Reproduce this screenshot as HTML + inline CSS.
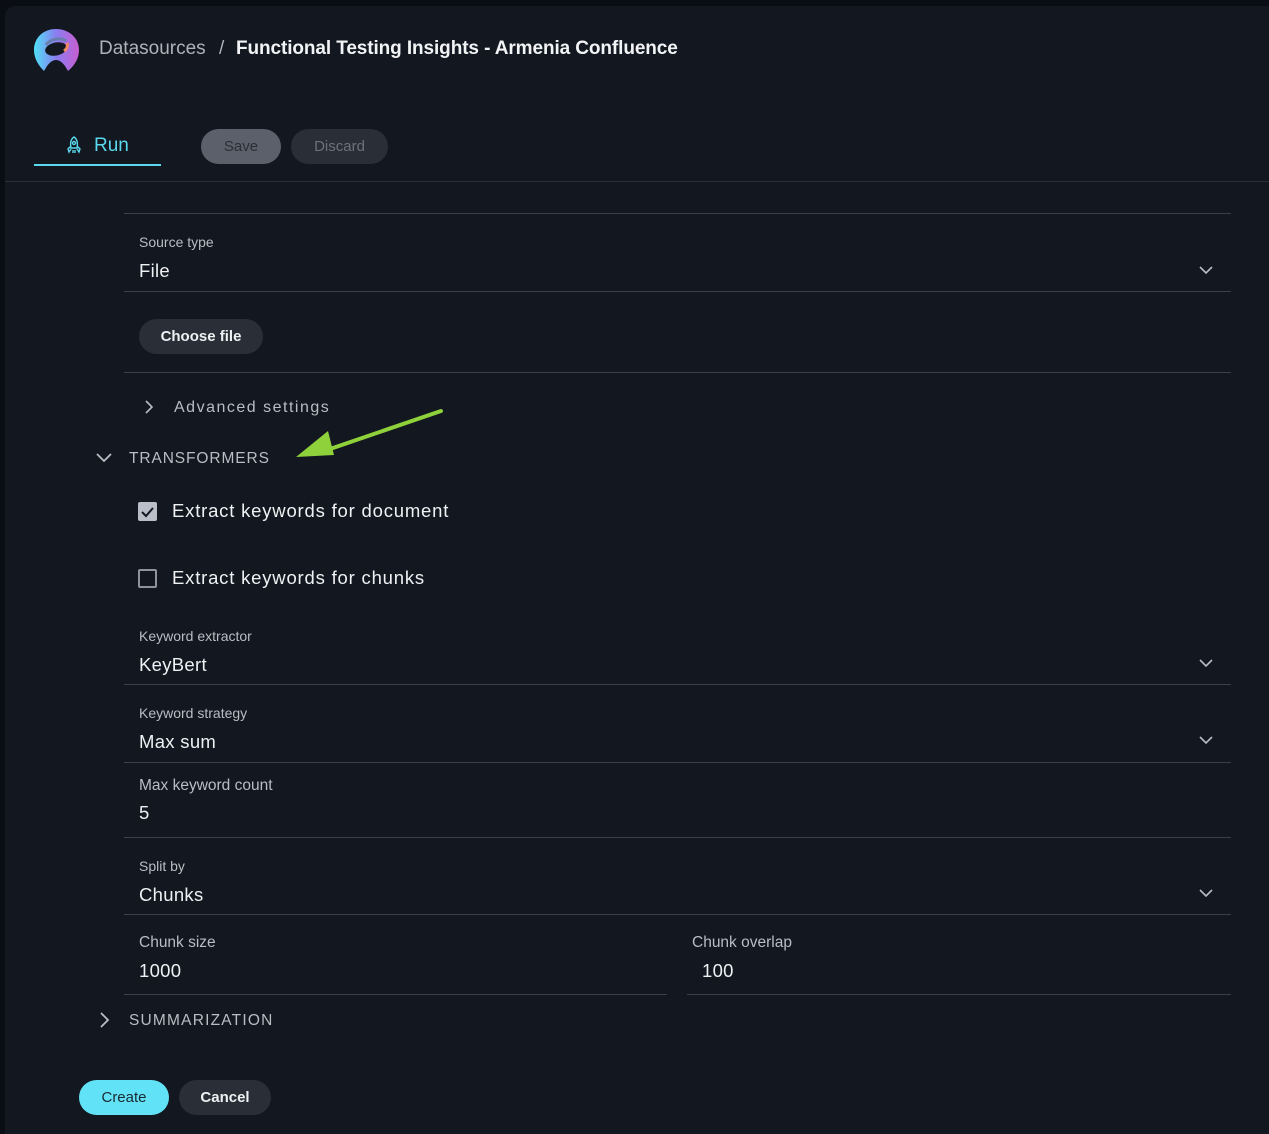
<!DOCTYPE html>
<html><head><meta charset="utf-8"><style>
*{margin:0;padding:0;box-sizing:border-box}
body{width:1269px;height:1134px;background:#0a0d13;font-family:"Liberation Sans",sans-serif;position:relative;overflow:hidden;color:#eceef0}
.panel{position:absolute;left:5px;top:6px;width:1264px;height:1128px;background:#121720;border-radius:10px 0 0 0}
.a{position:absolute;white-space:nowrap}
.line{position:absolute;height:1px;background:#3b404a}
.lbl{font-size:14px;color:#b9bdc4}
.val{font-size:18.5px;color:#eef0f2;letter-spacing:0.3px}
.chev{position:absolute;width:18px;height:18px}
.btn{position:absolute;border-radius:18px;text-align:center;font-size:15px}
.cb{position:absolute;width:19px;height:19px;border:2px solid #8e949c;border-radius:2px}
</style></head><body>
<div class="panel"></div>
<svg class="a" style="left:33px;top:28px" width="47" height="45" viewBox="0 0 47 45">
<defs><linearGradient id="g" x1="0" x2="1" y1="0" y2="0"><stop offset="0" stop-color="#4fe0f6"/><stop offset="0.5" stop-color="#8b7cf0"/><stop offset="1" stop-color="#c85ed0"/></linearGradient></defs>
<path d="M23 1C10 1 1 10 1 22c0 9 5 16 10 21l3-5c3-4 6-6 9-6s6 2 9 6l3 5c6-5 11-12 11-21C46 10 36 1 23 1z" fill="url(#g)"/>
<ellipse cx="23" cy="21" rx="11" ry="6.5" fill="#121720" transform="rotate(-12 23 21)"/>
<path d="M13 17c4-6 14-8 20-4" stroke="#6a7fb0" stroke-width="3" fill="none"/>
<path d="M31 23c3-2 4-5 3-8" stroke="#f08a60" stroke-width="3" fill="none"/>
</svg>
<div class="a" style="left:99px;top:38px;font-size:19px;color:#aeb3ba">Datasources</div>
<div class="a" style="left:219px;top:38px;font-size:19px;color:#aeb3ba">/</div>
<div class="a" style="left:236px;top:38px;font-size:19px;font-weight:bold;color:#f2f3f5;letter-spacing:-0.1px">Functional Testing Insights - Armenia Confluence</div>
<svg class="a" style="left:65px;top:136px" width="18" height="19" viewBox="0 0 18 19" fill="none" stroke="#5ad8ee" stroke-width="1.4"><path d="M9 1c3 2 4 6 3 11H6C5 7 6 3 9 1z"/><circle cx="9" cy="7" r="1.5"/><path d="M6 10l-3 3 1 3 2-3M12 10l3 3-1 3-2-3M8 14v3M10 14v3"/></svg>
<div class="a" style="left:94px;top:135px;font-size:19px;color:#5ad8ee">Run</div>
<div class="a" style="left:34px;top:164px;width:127px;height:2px;background:#5ad8ee"></div>
<div class="btn" style="left:201px;top:129px;width:80px;height:35px;line-height:35px;background:#5c606a;color:#2a2e36">Save</div>
<div class="btn" style="left:291px;top:129px;width:97px;height:35px;line-height:35px;background:#2a2e36;color:#6c717a">Discard</div>
<div class="line" style="left:5px;top:181px;width:1264px;background:#2a2f38"></div>

<div class="line" style="left:124px;top:213px;width:1107px"></div>
<div class="a lbl" style="left:139px;top:234px">Source type</div>
<div class="a val" style="left:139px;top:260px">File</div>
<svg class="chev" style="left:1197px;top:261px" viewBox="0 0 18 18"><path d="M3 6l6 6 6-6" stroke="#b9bdc4" stroke-width="1.6" fill="none"/></svg>
<div class="line" style="left:124px;top:291px;width:1107px"></div>
<div class="btn" style="left:139px;top:319px;width:124px;height:35px;line-height:35px;background:#2a2f37;font-weight:bold;color:#eef0f2">Choose file</div>
<div class="line" style="left:124px;top:372px;width:1107px"></div>
<svg class="chev" style="left:140px;top:398px" viewBox="0 0 18 18"><path d="M6 3l6 6-6 6" stroke="#b9bdc4" stroke-width="1.6" fill="none"/></svg>
<div class="a" style="left:174px;top:399px;font-size:16px;color:#b9bdc4;letter-spacing:1.5px">Advanced settings</div>
<svg class="a" style="left:290px;top:405px" width="156" height="56" viewBox="0 0 156 56"><path d="M151 6L40 44" stroke="#8ed13a" stroke-width="4" stroke-linecap="round"/><path d="M6 52L38 26 44 50z" fill="#8ed13a"/></svg>
<svg class="chev" style="left:95px;top:448px" viewBox="0 0 18 18"><path d="M2 6l7 7 7-7" stroke="#b9bdc4" stroke-width="1.8" fill="none"/></svg>
<div class="a" style="left:129px;top:450px;font-size:15.5px;color:#b9bdc4;letter-spacing:0.9px">TRANSFORMERS</div>
<div class="cb" style="left:138px;top:502px;background:#b9bfc8;border-color:#b9bfc8"></div>
<svg class="a" style="left:138px;top:502px" width="19" height="19" viewBox="0 0 19 19"><path d="M4 10l4 4 7-8" stroke="#121720" stroke-width="2" fill="none"/></svg>
<div class="a" style="left:172px;top:500px;font-size:18.5px;color:#f0f1f3;letter-spacing:0.8px">Extract keywords for document</div>
<div class="cb" style="left:138px;top:569px"></div>
<div class="a" style="left:172px;top:567px;font-size:18.5px;color:#f0f1f3;letter-spacing:0.8px">Extract keywords for chunks</div>

<div class="a lbl" style="left:139px;top:628px">Keyword extractor</div>
<div class="a val" style="left:139px;top:654px">KeyBert</div>
<svg class="chev" style="left:1197px;top:654px" viewBox="0 0 18 18"><path d="M3 6l6 6 6-6" stroke="#b9bdc4" stroke-width="1.6" fill="none"/></svg>
<div class="line" style="left:124px;top:684px;width:1107px"></div>
<div class="a lbl" style="left:139px;top:705px">Keyword strategy</div>
<div class="a val" style="left:139px;top:731px">Max sum</div>
<svg class="chev" style="left:1197px;top:731px" viewBox="0 0 18 18"><path d="M3 6l6 6 6-6" stroke="#b9bdc4" stroke-width="1.6" fill="none"/></svg>
<div class="line" style="left:124px;top:762px;width:1107px"></div>
<div class="a" style="left:139px;top:777px;font-size:15.5px;color:#b9bdc4">Max keyword count</div>
<div class="a val" style="left:139px;top:802px">5</div>
<div class="line" style="left:124px;top:837px;width:1107px"></div>
<div class="a lbl" style="left:139px;top:858px">Split by</div>
<div class="a val" style="left:139px;top:884px">Chunks</div>
<svg class="chev" style="left:1197px;top:884px" viewBox="0 0 18 18"><path d="M3 6l6 6 6-6" stroke="#b9bdc4" stroke-width="1.6" fill="none"/></svg>
<div class="line" style="left:124px;top:914px;width:1107px"></div>
<div class="a" style="left:139px;top:934px;font-size:15.5px;color:#b9bdc4">Chunk size</div>
<div class="a val" style="left:139px;top:960px">1000</div>
<div class="line" style="left:124px;top:994px;width:543px"></div>
<div class="a" style="left:692px;top:934px;font-size:15.5px;color:#b9bdc4">Chunk overlap</div>
<div class="a val" style="left:702px;top:960px">100</div>
<div class="line" style="left:687px;top:994px;width:544px"></div>
<svg class="chev" style="left:95px;top:1011px" viewBox="0 0 18 18"><path d="M6 2l7 7-7 7" stroke="#b9bdc4" stroke-width="1.8" fill="none"/></svg>
<div class="a" style="left:129px;top:1012px;font-size:15.5px;color:#b9bdc4;letter-spacing:1.2px">SUMMARIZATION</div>
<div class="btn" style="left:79px;top:1080px;width:90px;height:35px;line-height:35px;background:#62e2f6;color:#1a2a33">Create</div>
<div class="btn" style="left:179px;top:1080px;width:92px;height:35px;line-height:35px;background:#2a2f37;font-weight:bold;color:#eef0f2">Cancel</div>
</body></html>
